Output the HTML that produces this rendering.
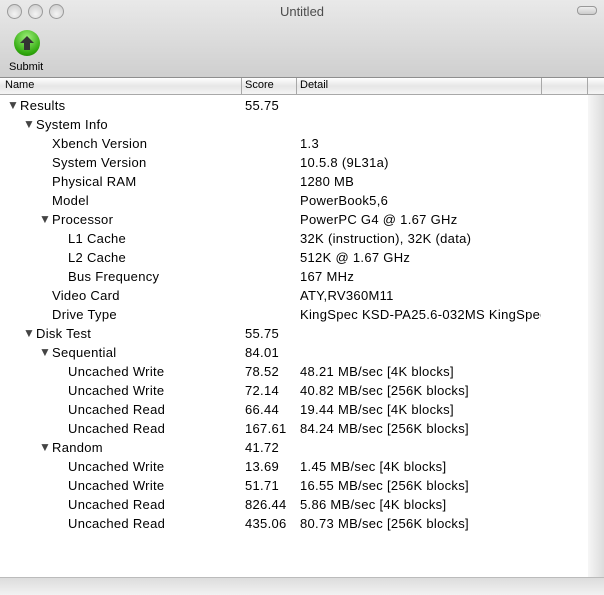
<html><head><style>
body{margin:0;width:604px;height:594px;overflow:hidden;font-family:"Liberation Sans",sans-serif;font-size:13px;color:#000;background:#fff;position:relative}
.top{position:absolute;left:0;top:0;width:604px;height:77px;background:linear-gradient(#e9e9e9,#cfcfcf);border-bottom:1px solid #8e8e8e}
.title{position:absolute;top:4px;width:604px;text-align:center;color:#4d4d4d;font-size:13px}
.tl{position:absolute;top:4px;width:13px;height:13px;border-radius:50%;background:radial-gradient(circle at 50% 70%,#f4f4f4,#c8c8c8);border:1px solid #9a9a9a}
.hdr{position:absolute;top:78px;left:0;width:604px;height:16px;background:linear-gradient(#fff,#e6e6e6 50%,#f4f4f4);border-bottom:1px solid #a8a8a8;font-size:11px}
.hdr span{position:absolute;top:1px}
.vl{position:absolute;top:78px;height:16px;width:1px;background:#a8a8a8}
.row{position:absolute;left:0;height:19px;line-height:19px;white-space:nowrap;letter-spacing:0.3px}
.row span{position:absolute}
.tri{font-size:12px;color:#444;letter-spacing:0}
</style></head><body>
<div class="top">
<div class="title">Untitled</div>
<div class="tl" style="left:7px"></div><div class="tl" style="left:28px"></div><div class="tl" style="left:49px"></div>
<div style="position:absolute;left:577px;top:6px;width:18px;height:7px;border:1px solid #999;border-radius:4px;background:linear-gradient(#eee,#ccc)"></div>
<div style="position:absolute;left:14px;top:30px;width:26px;height:26px;border-radius:50%;background:radial-gradient(circle at 50% 30%,#9ef07a,#2fa80c 70%,#1c6d05);"></div>
<svg style="position:absolute;left:14px;top:30px" width="26" height="26"><path d="M13 6 L20 13 L16 13 L16 20 L10 20 L10 13 L6 13 Z" fill="#333"/></svg>
<div style="position:absolute;left:9px;top:61px;font-size:11px">Submit</div>
</div>
<div class="hdr"><span style="left:5px">Name</span><span style="left:245px">Score</span><span style="left:300px">Detail</span></div>
<div class="vl" style="left:241px"></div><div class="vl" style="left:296px"></div><div class="vl" style="left:541px"></div><div class="vl" style="left:587px"></div>
<div style="position:absolute;left:588px;top:95px;width:16px;height:482px;background:linear-gradient(90deg,#f6f6f6,#dcdcdc)"></div>
<div style="position:absolute;left:0;top:577px;width:604px;height:17px;background:linear-gradient(#dcdcdc,#f2f2f2);border-top:1px solid #bbb"></div>
<div style="position:absolute;left:0;top:96px;width:588px;height:481px;overflow:hidden">
<div class="row" style="top:0"><span class="tri" style="left:7px">▼</span><span style="left:20px">Results</span><span style="left:245px">55.75</span></div>
<div class="row" style="top:19px"><span class="tri" style="left:23px">▼</span><span style="left:36px">System Info</span></div>
<div class="row" style="top:38px"><span style="left:52px">Xbench Version</span><span style="left:300px">1.3</span></div>
<div class="row" style="top:57px"><span style="left:52px">System Version</span><span style="left:300px">10.5.8 (9L31a)</span></div>
<div class="row" style="top:76px"><span style="left:52px">Physical RAM</span><span style="left:300px">1280 MB</span></div>
<div class="row" style="top:95px"><span style="left:52px">Model</span><span style="left:300px">PowerBook5,6</span></div>
<div class="row" style="top:114px"><span class="tri" style="left:39px">▼</span><span style="left:52px">Processor</span><span style="left:300px">PowerPC G4 @ 1.67 GHz</span></div>
<div class="row" style="top:133px"><span style="left:68px">L1 Cache</span><span style="left:300px">32K (instruction), 32K (data)</span></div>
<div class="row" style="top:152px"><span style="left:68px">L2 Cache</span><span style="left:300px">512K @ 1.67 GHz</span></div>
<div class="row" style="top:171px"><span style="left:68px">Bus Frequency</span><span style="left:300px">167 MHz</span></div>
<div class="row" style="top:190px"><span style="left:52px">Video Card</span><span style="left:300px">ATY,RV360M11</span></div>
<div class="row" style="top:209px;width:541px;overflow:hidden"><span style="left:52px">Drive Type</span><span style="left:300px">KingSpec KSD-PA25.6-032MS KingSpec KSD</span></div>
<div class="row" style="top:228px"><span class="tri" style="left:23px">▼</span><span style="left:36px">Disk Test</span><span style="left:245px">55.75</span></div>
<div class="row" style="top:247px"><span class="tri" style="left:39px">▼</span><span style="left:52px">Sequential</span><span style="left:245px">84.01</span></div>
<div class="row" style="top:266px"><span style="left:68px">Uncached Write</span><span style="left:245px">78.52</span><span style="left:300px">48.21 MB/sec [4K blocks]</span></div>
<div class="row" style="top:285px"><span style="left:68px">Uncached Write</span><span style="left:245px">72.14</span><span style="left:300px">40.82 MB/sec [256K blocks]</span></div>
<div class="row" style="top:304px"><span style="left:68px">Uncached Read</span><span style="left:245px">66.44</span><span style="left:300px">19.44 MB/sec [4K blocks]</span></div>
<div class="row" style="top:323px"><span style="left:68px">Uncached Read</span><span style="left:245px">167.61</span><span style="left:300px">84.24 MB/sec [256K blocks]</span></div>
<div class="row" style="top:342px"><span class="tri" style="left:39px">▼</span><span style="left:52px">Random</span><span style="left:245px">41.72</span></div>
<div class="row" style="top:361px"><span style="left:68px">Uncached Write</span><span style="left:245px">13.69</span><span style="left:300px">1.45 MB/sec [4K blocks]</span></div>
<div class="row" style="top:380px"><span style="left:68px">Uncached Write</span><span style="left:245px">51.71</span><span style="left:300px">16.55 MB/sec [256K blocks]</span></div>
<div class="row" style="top:399px"><span style="left:68px">Uncached Read</span><span style="left:245px">826.44</span><span style="left:300px">5.86 MB/sec [4K blocks]</span></div>
<div class="row" style="top:418px"><span style="left:68px">Uncached Read</span><span style="left:245px">435.06</span><span style="left:300px">80.73 MB/sec [256K blocks]</span></div>
</div>
</body></html>
